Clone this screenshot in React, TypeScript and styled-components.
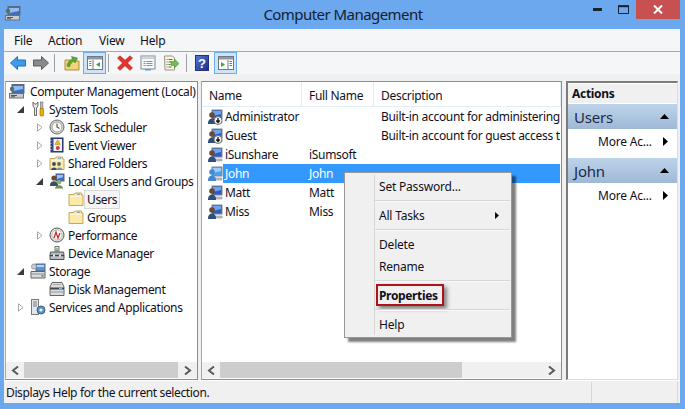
import styled, { createGlobalStyle } from "styled-components";

const Global = createGlobalStyle`
  html, body { margin: 0; padding: 0; }
  body { font: 12px "Noto Sans", "Open Sans", sans-serif; color: #10101c; }
`;

const Window = styled.div`
  position: relative;
  width: 685px;
  height: 409px;
  overflow: hidden;
  background: #6ca8ee;
  display: flex;
  flex-direction: column;
`;

const TitleBar = styled.div`
  height: 29px;
  flex: none;
  display: flex;
  align-items: flex-start;
`;

const AppIcon = styled.div`
  width: 17px;
  height: 17px;
  margin: 5px 0 0 5px;
`;

const Title = styled.div`
  flex: 1;
  text-align: center;
  font-size: 15px;
  line-height: 28px;
  letter-spacing: -0.55px;
  color: #15202e;
  padding-left: 80px;
`;

const CaptionButton = styled.div<{ $w: number; $close?: boolean }>`
  width: ${(p) => p.$w}px;
  height: 19px;
  display: flex;
  align-items: center;
  justify-content: center;
  background: ${(p) => (p.$close ? "#c75050" : "transparent")};
`;

const CaptionRow = styled.div`
  display: flex;
  margin-right: 5px;
  flex: none;
`;

const Client = styled.div`
  flex: none;
  height: 374px;
  margin: 0 5px 0 4px;
  background: #f0f0f0;
  display: flex;
  flex-direction: column;
`;

const MenuBar = styled.div`
  height: 22px;
  flex: none;
  background: #f5f6f7;
  border-bottom: 1px solid #a9a9a9;
  display: flex;
  align-items: center;
  padding-left: 10px;
`;

const MenuLabel = styled.span<{ $w: number }>`
  width: ${(p) => p.$w}px;
  letter-spacing: -0.2px;
`;

const Toolbar = styled.div`
  height: 22px;
  flex: none;
  background: #f5f6f7;
  display: flex;
  align-items: center;
  padding-left: 2px;
`;

const ToolButton = styled.div<{ $active?: boolean; $gap?: number }>`
  width: 23px;
  height: 22px;
  box-sizing: border-box;
  flex: none;
  display: flex;
  align-items: center;
  justify-content: center;
  margin-left: ${(p) => p.$gap ?? 0}px;
  ${(p) => p.$active && "background: #cfe3f7; border: 1px solid #6caee8;"}
`;

const ToolSep = styled.div<{ $before: number; $after: number }>`
  width: 1px;
  height: 18px;
  flex: none;
  background: #a0a0a0;
  margin: 0 ${(p) => p.$after}px 0 ${(p) => p.$before}px;
`;

const Panels = styled.div`
  flex: none;
  height: 299px;
  margin-top: 7px;
  display: flex;
  padding-left: 1px;
`;

const Pane = styled.div<{ $w: number; $gap: number }>`
  width: ${(p) => p.$w}px;
  margin-right: ${(p) => p.$gap}px;
  flex: none;
  box-sizing: border-box;
  background: #fff;
  border: 1px solid #8c8c8c;
  border-left-color: #a8a8a8;
  display: flex;
  flex-direction: column;
  overflow: hidden;
`;

const ActionPane = styled.div`
  width: 112px;
  flex: none;
  box-sizing: border-box;
  background: #fff;
  border-top: 2px solid #7c7c7c;
  border-left: 2px solid #7c7c7c;
  border-bottom: 1px solid #dcdcdc;
  border-right: 1px solid #dcdcdc;
  display: flex;
  flex-direction: column;
`;

const Grow = styled.div`
  flex: 1;
  min-height: 0;
  overflow: hidden;
`;

const TreeRow = styled.div<{ $depth: number }>`
  height: 18px;
  display: flex;
  align-items: center;
  white-space: nowrap;
  letter-spacing: -0.36px;
  padding-left: ${(p) => (p.$depth === 0 ? 3 : 19 * p.$depth - 8)}px;
`;

const Twist = styled.div`
  width: 11px;
  height: 18px;
  margin-right: 2px;
  flex: none;
  display: flex;
  align-items: center;
`;

const TreeIcon = styled.div<{ $root?: boolean }>`
  width: 16px;
  height: 16px;
  flex: none;
  margin-right: ${(p) => (p.$root ? 5 : 3)}px;
`;

const TreeLabel = styled.span<{ $selected?: boolean }>`
  ${(p) =>
    p.$selected &&
    "background: #f5f5f5; outline: 1px solid #d9d9d9; padding: 0 2px; margin-left: -2px; line-height: 17px;"}
`;

const ScrollBar = styled.div`
  height: 16px;
  flex: none;
  margin-bottom: 1px;
  background: #f0f0f0;
  display: flex;
`;

const ScrollArrow = styled.div`
  width: 18px;
  flex: none;
  display: flex;
  align-items: center;
  justify-content: center;
`;

const ScrollThumb = styled.div<{ $w: number }>`
  width: ${(p) => p.$w}px;
  flex: none;
  background: #cdcdcd;
`;

const ScrollTrack = styled.div`
  flex: 1;
`;

const ListHead = styled.div`
  height: 24px;
  flex: none;
  display: flex;
  align-items: center;
  border-bottom: 1px solid #e3edf8;
  letter-spacing: -0.3px;
`;

const HeadCell = styled.div<{ $w: number }>`
  width: ${(p) => p.$w}px;
  height: 100%;
  box-sizing: border-box;
  display: flex;
  align-items: center;
  padding: 2px 0 0 7px;
  border-right: 1px solid #e3edf8;
  flex: none;
`;

const ListRow = styled.div`
  height: 19px;
  display: flex;
  align-items: center;
  padding-left: 5px;
  white-space: nowrap;
`;

const RowIcon = styled.div`
  width: 16px;
  height: 16px;
  flex: none;
`;

const RowBody = styled.div<{ $selected?: boolean }>`
  width: 337px;
  height: 19px;
  flex: none;
  display: flex;
  align-items: center;
  padding-left: 2px;
  box-sizing: border-box;
  overflow: hidden;
  letter-spacing: -0.3px;
  background: ${(p) => (p.$selected ? "#3399ff" : "transparent")};
  color: ${(p) => (p.$selected ? "#fff" : "inherit")};
`;

const Cell = styled.span<{ $w: number }>`
  width: ${(p) => p.$w}px;
  flex: none;
`;

const ActionsHead = styled.div`
  margin-top: 1px;
  height: 19px;
  flex: none;
  background: #f0f0f0;
  font-weight: 700;
  line-height: 19px;
  padding-left: 4px;
  letter-spacing: -0.3px;
  border-bottom: 1px solid #fff;
`;

const GroupHead = styled.div`
  height: 25px;
  flex: none;
  background: linear-gradient(#bdd4ea, #9fb8d5);
  display: flex;
  align-items: center;
  justify-content: space-between;
  padding: 0 8px 0 6px;
  font-size: 15px;
  letter-spacing: -0.2px;
  color: #1b2a48;
`;

const GroupItem = styled.div`
  height: 25px;
  margin-bottom: 4px;
  display: flex;
  align-items: center;
  justify-content: space-between;
  padding: 0 9px 0 30px;
  letter-spacing: -0.2px;
`;

const StatusBar = styled.div`
  flex: 1;
  display: flex;
  align-items: center;
  border-top: 1px solid #fff;
  padding-left: 2px;
  letter-spacing: -0.37px;
`;

const StatusText = styled.div`
  width: 586px;
  box-sizing: border-box;
  border-right: 1px solid #d8d8d8;
  line-height: 21px;
  flex: none;
  margin-right: 85px;
`;

const StatusEnd = styled.div`
  width: 1px;
  height: 21px;
  background: #d8d8d8;
  flex: none;
`;

const Menu = styled.div`
  position: absolute;
  left: 344px;
  top: 172px;
  width: 168px;
  height: 166px;
  box-sizing: border-box;
  padding: 2px 1px 2px 0;
  background: #f0f0f0;
  border: 1px solid #979797;
  box-shadow: 4px 4px 2px rgba(0, 0, 0, 0.5);
  display: flex;
  letter-spacing: -0.2px;
`;

const MenuBody = styled.div`
  margin-left: 29px;
  flex: 1;
  border-left: 1px solid #d7d7d7;
  display: flex;
  flex-direction: column;
`;

const MenuItem = styled.div`
  height: 22px;
  flex: none;
  display: flex;
  align-items: center;
  justify-content: space-between;
  padding: 0 11px 0 4px;
`;

const MenuSep = styled.div`
  height: 1px;
  margin: 3px 0 2px;
  flex: none;
  background: #d7d7d7;
  border-bottom: 1px solid #f8f8f8;
`;

const Marked = styled.div`
  height: 22px;
  width: 68px;
  flex: none;
  box-sizing: border-box;
  margin-left: 1px;
  padding-left: 1px;
  border: 2px solid #b01219;
  box-shadow: 3px 3px 4px rgba(0, 0, 0, 0.45);
  display: flex;
  align-items: center;
  font-weight: 700;
  letter-spacing: -0.35px;
  white-space: nowrap;
`;

const Ico = ({ children }: { children: React.ReactNode }) => (
  <svg width="16" height="16" viewBox="0 0 16 16" style={{ display: "block" }}>
    {children}
  </svg>
);

const Tower = () => (
  <Ico>
    <rect x="3" y="1.5" width="12" height="8.5" fill="#3b6fc9" stroke="#5a6a80" />
    <path d="M4 3h10v3L4 8z" fill="#8fbdf2" />
    <rect x="0.5" y="10.5" width="14" height="4.5" fill="#c8ccd2" stroke="#6d7278" />
    <path d="M2 12.5h6M2 13.8h4" stroke="#555" />
    <circle cx="3" cy="6" r="2.2" fill="#5d6e5a" />
  </Ico>
);

const Tools = () => (
  <Ico>
    <path d="M3 1v4l1.5 2v7.5h2V7L8 5V1L6.5 3h-2z" fill="#e8e8e8" stroke="#5f5f5f" strokeWidth="0.9" />
    <rect x="10.5" y="1" width="2.4" height="7" fill="#bdbdbd" stroke="#666" strokeWidth="0.6" />
    <rect x="10" y="7.5" width="3.6" height="7.5" rx="1" fill="#f0b400" stroke="#8a6500" strokeWidth="0.6" />
  </Ico>
);

const Clock = () => (
  <Ico>
    <circle cx="8" cy="8" r="7" fill="#d8d8d8" stroke="#6c6c6c" />
    <circle cx="8" cy="8" r="5" fill="#fdfdf8" stroke="#a0a0a0" />
    <path d="M8 4.5V8l2.5 1.5" fill="none" stroke="#555" strokeWidth="1.2" />
  </Ico>
);

const EventBook = () => (
  <Ico>
    <rect x="2" y="1" width="12" height="14" fill="#33468a" stroke="#27305f" />
    <rect x="4.5" y="2" width="8.5" height="12" fill="#eef0f6" />
    <path d="M8.7 2.8l2.6 4.6H6z" fill="#f2c200" stroke="#9c7a00" strokeWidth="0.5" />
    <circle cx="8.8" cy="11" r="2" fill="#d33b3b" />
    <path d="M2 3v1M2 6v1M2 9v1M2 12v1" stroke="#ddd" />
  </Ico>
);

const Folder = ({ share }: { share?: boolean }) => (
  <Ico>
    <path d="M1 3.5h5l1-1.5h6.5v2H15v10.5H1z" fill="#fbe9a9" stroke="#c6a85c" />
    <path d="M2 5h12v1H2z" fill="#fff6d4" />
    <rect x="9" y="2.5" width="3" height="1.5" fill="#7fb2e0" />
    {share && (
      <>
        <circle cx="5" cy="9" r="1.9" fill="#3a4a66" />
        <path d="M2 15c0-3.5 6-3.5 6 0z" fill="#3a4a66" />
        <circle cx="10" cy="9" r="1.9" fill="#53704e" />
        <path d="M7.5 15c0-3.5 6-3.5 6 0z" fill="#7b8fa8" />
      </>
    )}
  </Ico>
);

const People = () => (
  <Ico>
    <rect x="7" y="1" width="8" height="7" fill="#3a6fd0" stroke="#56657c" />
    <path d="M8 2h6v2l-6 2z" fill="#9cc6f5" />
    <circle cx="5" cy="5" r="2.6" fill="#6b4a2d" />
    <path d="M1 12c0-5 8-5 8 0v1H1z" fill="#3d4e5c" />
    <circle cx="10" cy="9.3" r="2.2" fill="#8fae6c" />
    <path d="M6 15.5c0-4.5 8-4.5 8 0z" fill="#6c9456" />
  </Ico>
);

const Gauge = () => (
  <Ico>
    <circle cx="8" cy="8" r="7" fill="#e6e6e6" stroke="#555" />
    <circle cx="8" cy="8" r="5" fill="#fff" stroke="#999" strokeWidth="0.6" />
    <path d="M5 11l2-6 2 6 2-5" fill="none" stroke="#c92b20" strokeWidth="1.3" />
  </Ico>
);

const Device = () => (
  <Ico>
    <rect x="6" y="1.5" width="4" height="4.5" fill="#d8e6d5" stroke="#777" />
    <path d="M8 3v3" stroke="#4e9b46" />
    <path d="M1.5 7h13l.5 2.5v5H1v-5z" fill="#b9bec3" stroke="#4f5459" />
    <path d="M1 10.5h14" stroke="#3d4145" strokeWidth="1.4" />
    <rect x="4" y="9.6" width="2" height="2" fill="#eee" />
    <rect x="10" y="9.6" width="2" height="2" fill="#eee" />
  </Ico>
);

const Storage = () => (
  <Ico>
    <rect x="6" y="1" width="9" height="7" fill="#5b93d6" stroke="#5a6a80" />
    <path d="M7 2h7v2H7z" fill="#b5d6f6" />
    <circle cx="4" cy="3.5" r="2.6" fill="#c7cbd0" stroke="#777" strokeWidth="0.6" />
    <path d="M1 8.5h14V15H1z" fill="#d9dcdf" stroke="#5f6468" />
    <path d="M1 11h14" stroke="#8b9095" />
    <rect x="11.5" y="12" width="2" height="1.8" fill="#4fa83d" />
  </Ico>
);

const Disk = () => (
  <Ico>
    <path d="M3 1.5h10L15 6v8.5H1V6z" fill="#dcdcdc" stroke="#666" />
    <path d="M1 7.5h14" stroke="#40464c" strokeWidth="2" />
    <path d="M1 11h14" stroke="#999" />
    <rect x="10" y="6.8" width="3" height="1.4" fill="#6fc2ee" />
    <path d="M4 3.5h8" stroke="#aaa" />
  </Ico>
);

const Services = () => (
  <Ico>
    <rect x="1.5" y="0.5" width="7" height="15" fill="#e4e7ea" stroke="#737a80" />
    <path d="M3 3h4M3 5h4M3 7h4" stroke="#6f7a86" />
    <circle cx="11" cy="11" r="4" fill="#5f8fbe" stroke="#3c6288" />
    <circle cx="11" cy="11" r="1.6" fill="#eef4fa" />
  </Ico>
);

const UserPc = ({ admin, selected }: { admin?: boolean; selected?: boolean }) => (
  <Ico>
    <rect x="5" y="1" width="10" height="9" fill={selected ? "#4aa0ec" : "#2d5cc4"} stroke="#7c8794" />
    <path d="M6 2h8v3L6 7z" fill={selected ? "#9ccdf6" : "#6ea6ec"} />
    <path d="M7 12h8v2H7z" fill="#bfc4ca" stroke="#8a8f95" strokeWidth="0.6" />
    <circle cx="5" cy="6" r="2.8" fill={selected ? "#4c89c8" : "#6a4a34"} />
    <path d="M1 14c0-6 8-6 8 0v1H1z" fill={selected ? "#3f87d0" : "#2f4f7a"} />
    {admin && (
      <>
        <circle cx="11" cy="11.5" r="4" fill="#f2f2f2" stroke="#6d6d6d" />
        <path d="M11 9v4M9.3 11.5l1.7 2 1.7-2" fill="none" stroke="#111" strokeWidth="1.3" />
      </>
    )}
  </Ico>
);

const Arrow = ({ fill, stroke, flip }: { fill: string; stroke: string; flip?: boolean }) => (
  <Ico>
    <path
      d={flip ? "M15.5 8L8.5 1.5V5H.5v6h8v3.5z" : "M.5 8L7.5 1.5V5h8v6h-8v3.5z"}
      fill={fill}
      stroke={stroke}
    />
  </Ico>
);

const UpFolder = () => (
  <Ico>
    <path d="M1 5h5l1 1h8v9H1z" fill="#f2d27d" stroke="#b18f3e" />
    <path d="M3 11C4 6 7 4 8.5 4L7.5 1.5l6 1.5L11 8 10 6C8 7 6 9 5.5 12z" fill="#5aa82f" stroke="#3d7c1d" strokeWidth="0.5" />
  </Ico>
);

const PaneToggle = ({ right }: { right?: boolean }) => (
  <Ico>
    <rect x="0.5" y="1.5" width="15" height="13" fill="#fff" stroke="#71787f" />
    <rect x="1" y="2" width="14" height="2.5" fill="#8d9aa6" />
    {right ? (
      <>
        <path d="M10 5v9" stroke="#71787f" />
        <path d="M3 7l4 2.5L3 12z" fill="#35a83a" />
        <path d="M11.5 6.5H14M11.5 8.5H14M11.5 10.5H14" stroke="#4f7cc0" strokeWidth="1.2" />
      </>
    ) : (
      <>
        <path d="M6 5v9" stroke="#71787f" />
        <path d="M2 6.5h2.5M2 8.5h2.5M2 10.5h2.5" stroke="#7c8a96" strokeWidth="1.2" />
        <path d="M13 7L9 9.5l4 2.5z" fill="#35a83a" />
      </>
    )}
  </Ico>
);

const RedX = () => (
  <Ico>
    <path
      d="M3 .8L8 5.3 13 .8l2.5 2.3L10.5 8l5 5-2.5 2.3L8 10.7l-5 4.6L.5 13l5-5-5-4.9z"
      fill="#e3342c"
      stroke="#b3201b"
      strokeWidth="0.6"
    />
  </Ico>
);

const PropsDoc = () => (
  <Ico>
    <rect x="1" y="1" width="14" height="13" fill="#f5f7f9" stroke="#7f878f" />
    <rect x="1.5" y="1.5" width="13" height="2.5" fill="#c9d1d9" />
    <path d="M3.5 6.5h2M6.5 6.5h6M3.5 8.5h2M6.5 8.5h6M3.5 10.5h2M6.5 10.5h6" stroke="#7b94b2" />
    <rect x="5" y="14" width="6" height="1.5" fill="#3fa9e0" />
  </Ico>
);

const ExportDoc = () => (
  <Ico>
    <path d="M1.5 1h8l2 2v12H2z" fill="#f9f6e2" stroke="#9a9580" />
    <path d="M3.5 4.500h1M5.500 4.500h4M3.500 7h1M5.500 7h3M3.500 9.500h1M5.500 9.500h2M3.500 12h1M5.500 12h3" stroke="#67635a" />
    <path d="M8 6.500h3.500V4L16 8.500 11.500 13v-2.500H8z" fill="#6cc24a" stroke="#3f8f2a" strokeWidth="0.5" />
  </Ico>
);

const HelpBook = () => (
  <svg width="14" height="16" viewBox="0 0 14 16" style={{ display: "block" }}>
    <defs>
      <linearGradient id="hb" x1="0" y1="0" x2="1" y2="1">
        <stop offset="0" stopColor="#5a7bd8" />
        <stop offset="1" stopColor="#1c2c80" />
      </linearGradient>
    </defs>
    <rect x="0.5" y="0.5" width="13" height="15" fill="url(#hb)" stroke="#27307a" />
    <text x="7" y="12.5" textAnchor="middle" fontFamily="Liberation Sans" fontWeight="700" fontSize="13" fill="#fff">
      ?
    </text>
  </svg>
);

const Open = () => (
  <svg width="7" height="9" viewBox="0 0 7 9">
    <path d="M1.5.8L6 4.5 1.5 8.2z" fill="#fff" stroke="#a6a6a6" />
  </svg>
);

const Expanded = () => (
  <svg width="7" height="7" viewBox="0 0 7 7">
    <path d="M7 0v7H0z" fill="#3c3c3c" />
  </svg>
);

const Chevron = ({ right }: { right?: boolean }) => (
  <svg width="8" height="9" viewBox="0 0 8 9">
    <path d={right ? "M1 .5l5 4-5 4" : "M7 .5l-5 4 5 4"} fill="none" stroke="#5a5a5a" strokeWidth="2" />
  </svg>
);

const TriUp = () => (
  <svg width="9" height="5" viewBox="0 0 9 5" style={{ display: "block" }}>
    <path d="M4.5 0L9 5H0z" fill="#000" />
  </svg>
);

const TriRight = ({ w = 5, h = 9 }: { w?: number; h?: number }) => (
  <svg width={w} height={h} viewBox="0 0 5 9" style={{ display: "block" }}>
    <path d="M0 0l5 4.5L0 9z" fill="#000" />
  </svg>
);

type Twisty = "open" | "closed" | "none";
const tree: { depth: number; twist: Twisty; icon: React.ReactNode; label: string; selected?: boolean }[] = [
  { depth: 0, twist: "none", icon: <Tower />, label: "Computer Management (Local)" },
  { depth: 1, twist: "open", icon: <Tools />, label: "System Tools" },
  { depth: 2, twist: "closed", icon: <Clock />, label: "Task Scheduler" },
  { depth: 2, twist: "closed", icon: <EventBook />, label: "Event Viewer" },
  { depth: 2, twist: "closed", icon: <Folder share />, label: "Shared Folders" },
  { depth: 2, twist: "open", icon: <People />, label: "Local Users and Groups" },
  { depth: 3, twist: "none", icon: <Folder />, label: "Users", selected: true },
  { depth: 3, twist: "none", icon: <Folder />, label: "Groups" },
  { depth: 2, twist: "closed", icon: <Gauge />, label: "Performance" },
  { depth: 2, twist: "none", icon: <Device />, label: "Device Manager" },
  { depth: 1, twist: "open", icon: <Storage />, label: "Storage" },
  { depth: 2, twist: "none", icon: <Disk />, label: "Disk Management" },
  { depth: 1, twist: "closed", icon: <Services />, label: "Services and Applications" },
];

const users = [
  { name: "Administrator", full: "", desc: "Built-in account for administering", admin: true },
  { name: "Guest", full: "", desc: "Built-in account for guest access to", admin: true },
  { name: "iSunshare", full: "iSumsoft", desc: "" },
  { name: "John", full: "John", desc: "", selected: true },
  { name: "Matt", full: "Matt", desc: "" },
  { name: "Miss", full: "Miss", desc: "" },
];

function Scroll({ thumb }: { thumb: number }) {
  return (
    <ScrollBar>
      <ScrollArrow>
        <Chevron />
      </ScrollArrow>
      <ScrollThumb $w={thumb} />
      <ScrollTrack />
      <ScrollArrow>
        <Chevron right />
      </ScrollArrow>
    </ScrollBar>
  );
}

function App() {
  return (
    <Window>
      <Global />
      <TitleBar>
        <AppIcon>
          <Tower />
        </AppIcon>
        <Title>Computer Management</Title>
        <CaptionRow>
          <CaptionButton $w={27}>
            <svg width="9" height="3" viewBox="0 0 9 3">
              <rect width="9" height="3" y="0" fill="#1a2230" />
            </svg>
          </CaptionButton>
          <CaptionButton $w={25}>
            <svg width="11" height="9" viewBox="0 0 11 9">
              <path d="M.5 1h10v7.5H.5z" fill="none" stroke="#1a2230" />
              <path d="M0 1.2h11" stroke="#1a2230" strokeWidth="2" />
            </svg>
          </CaptionButton>
          <CaptionButton $w={44} $close>
            <svg width="10" height="9" viewBox="0 0 10 9">
              <path d="M1 .5l8 8M9 .5l-8 8" stroke="#fff" strokeWidth="2" />
            </svg>
          </CaptionButton>
        </CaptionRow>
      </TitleBar>

      <Client>
        <MenuBar>
          <MenuLabel $w={34}>File</MenuLabel>
          <MenuLabel $w={51}>Action</MenuLabel>
          <MenuLabel $w={41}>View</MenuLabel>
          <MenuLabel $w={50}>Help</MenuLabel>
        </MenuBar>
        <Toolbar>
          <ToolButton>
            <Arrow fill="#3f9be8" stroke="#1f6db8" />
          </ToolButton>
          <ToolButton>
            <Arrow fill="#8a8a8a" stroke="#5c5c5c" flip />
          </ToolButton>
          <ToolSep $before={2} $after={5} />
          <ToolButton>
            <UpFolder />
          </ToolButton>
          <ToolButton $active>
            <PaneToggle />
          </ToolButton>
          <ToolSep $before={2} $after={4} />
          <ToolButton>
            <RedX />
          </ToolButton>
          <ToolButton>
            <PropsDoc />
          </ToolButton>
          <ToolButton>
            <ExportDoc />
          </ToolButton>
          <ToolSep $before={4} $after={3} />
          <ToolButton>
            <HelpBook />
          </ToolButton>
          <ToolButton $active $gap={1}>
            <PaneToggle right />
          </ToolButton>
        </Toolbar>

        <Panels>
          <Pane $w={193} $gap={3}>
            <Grow>
              {tree.map((row) => (
                <TreeRow key={row.label} $depth={row.depth}>
                  {row.depth > 0 && (
                    <Twist>
                      {row.twist === "open" && <Expanded />}
                      {row.twist === "closed" && <Open />}
                    </Twist>
                  )}
                  <TreeIcon $root={row.depth === 0}>{row.icon}</TreeIcon>
                  <TreeLabel $selected={row.selected}>{row.label}</TreeLabel>
                </TreeRow>
              ))}
            </Grow>
            <Scroll thumb={154} />
          </Pane>

          <Pane $w={361} $gap={4}>
            <Grow>
              <ListHead>
                <HeadCell $w={100}>Name</HeadCell>
                <HeadCell $w={72}>Full Name</HeadCell>
                <HeadCell $w={187}>Description</HeadCell>
              </ListHead>
              {users.map((u) => (
                <ListRow key={u.name}>
                  <RowIcon>
                    <UserPc admin={u.admin} selected={u.selected} />
                  </RowIcon>
                  <RowBody $selected={u.selected}>
                    <Cell $w={84}>{u.name}</Cell>
                    <Cell $w={72}>{u.full}</Cell>
                    <Cell $w={200}>{u.desc}</Cell>
                  </RowBody>
                </ListRow>
              ))}
            </Grow>
            <Scroll thumb={242} />
          </Pane>

          <ActionPane>
            <ActionsHead>Actions</ActionsHead>
            <GroupHead>
              Users
              <TriUp />
            </GroupHead>
            <GroupItem>
              More Ac...
              <TriRight />
            </GroupItem>
            <GroupHead>
              John
              <TriUp />
            </GroupHead>
            <GroupItem>
              More Ac...
              <TriRight />
            </GroupItem>
          </ActionPane>
        </Panels>

        <StatusBar>
          <StatusText>Displays Help for the current selection.</StatusText>
          <StatusEnd />
        </StatusBar>
      </Client>

      <Menu>
        <MenuBody>
          <MenuItem>Set Password...</MenuItem>
          <MenuSep />
          <MenuItem>
            All Tasks
            <TriRight w={4} h={7} />
          </MenuItem>
          <MenuSep />
          <MenuItem>Delete</MenuItem>
          <MenuItem>Rename</MenuItem>
          <MenuSep />
          <Marked>Properties</Marked>
          <MenuSep />
          <MenuItem>Help</MenuItem>
        </MenuBody>
      </Menu>
    </Window>
  );
}

export default App;
